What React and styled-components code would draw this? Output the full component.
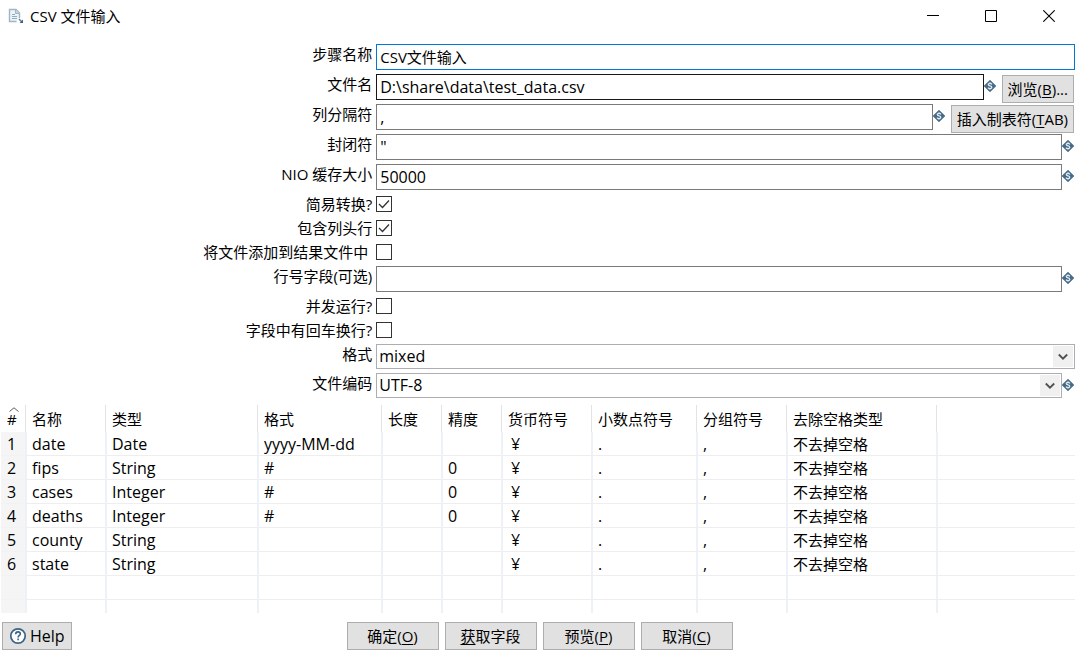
import React, { useState } from "react";
import styled, { createGlobalStyle } from "styled-components";

const checkRowsTop = [
  { id: "lazy", label: "简易转换?", checked: true },
  { id: "header", label: "包含列头行", checked: true },
  { id: "addResult", label: "将文件添加到结果文件中 ", checked: false },
];

const checkRowsBottom = [
  { id: "parallel", label: "并发运行?", checked: false },
  { id: "newline", label: "字段中有回车换行?", checked: false },
];

const columns = [
  { title: "名称", width: 80 },
  { title: "类型", width: 152 },
  { title: "格式", width: 124 },
  { title: "长度", width: 60 },
  { title: "精度", width: 60 },
  { title: "货币符号", width: 90 },
  { title: "小数点符号", width: 105 },
  { title: "分组符号", width: 90 },
  { title: "去除空格类型", width: 150 },
];

const fields = [
  ["date", "Date", "yyyy-MM-dd", "", "", "¥", ".", ",", "不去掉空格"],
  ["fips", "String", "#", "", "0", "¥", ".", ",", "不去掉空格"],
  ["cases", "Integer", "#", "", "0", "¥", ".", ",", "不去掉空格"],
  ["deaths", "Integer", "#", "", "0", "¥", ".", ",", "不去掉空格"],
  ["county", "String", "", "", "", "¥", ".", ",", "不去掉空格"],
  ["state", "String", "", "", "", "¥", ".", ",", "不去掉空格"],
];

const VariableIcon = () => (
  <Variable width="12" height="12" viewBox="0 0 12 12" aria-hidden="true">
    <path
      d="M6 0.6L11.4 6L6 11.4L0.6 6Z"
      fill="#456a87"
      stroke="#456a87"
      strokeWidth="1.2"
      strokeLinejoin="round"
    />
    <path
      d="M7.8 4.4C7.5 3.7 6.8 3.4 6 3.4C5 3.4 4.3 3.9 4.3 4.6C4.3 6.3 7.8 5.5 7.8 7.3C7.8 8.1 7 8.6 6 8.6C5.1 8.6 4.4 8.2 4.1 7.6M6 2.2V3.4M6 8.6V9.8"
      fill="none"
      stroke="#e3ebf0"
      strokeWidth="1.3"
    />
  </Variable>
);

const FileIcon = () => (
  <svg width="16" height="16" viewBox="0 0 16 16" aria-hidden="true">
    <path d="M8.5 13.5H1.5V1.5H8L11.5 5V10" fill="#eef3f7" stroke="#9fb6c6" strokeWidth="1.4" />
    <path d="M7.5 1.5V5.5H11.5" fill="#c5d4de" stroke="#9fb6c6" />
    <path d="M4 6.5H7M4 8.5H9M4 10.5H9" stroke="#8fabbe" />
    <path d="M11 11L14 14" stroke="#5b7d96" strokeWidth="1.4" />
    <path d="M15 11.5V15H11.5Z" fill="#3d6484" />
  </svg>
);

const TextRow = ({ id, label, value, tone, small, variable, children }) => (
  <Row>
    <Label htmlFor={id}>{label}</Label>
    <TextInput id={id} defaultValue={value} $tone={tone} $small={small} />
    {variable && <VariableIcon />}
    {children}
  </Row>
);

const CheckRow = ({ id, label, checked }) => {
  const [on, setOn] = useState(checked);
  return (
    <Row $height={24}>
      <Label htmlFor={id}>{label}</Label>
      <CheckWrapper>
        <CheckInput id={id} type="checkbox" checked={on} onChange={() => setOn(!on)} />
        {on && (
          <CheckMark width="16" height="16" viewBox="0 0 16 16" aria-hidden="true">
            <path d="M3 8L6.5 11.5L13 4.5" fill="none" stroke="#333333" strokeWidth="1.3" />
          </CheckMark>
        )}
      </CheckWrapper>
    </Row>
  );
};

const SelectRow = ({ id, label, value, variable }) => (
  <Row $height={29}>
    <Label htmlFor={id}>{label}</Label>
    <SelectWrapper>
      <Select id={id} defaultValue={value}>
        <option>{value}</option>
      </Select>
      <Arrow>
        <svg width="10" height="8" viewBox="0 0 10 8" aria-hidden="true">
          <path d="M0.8 1.5L5 5.7L9.2 1.5" fill="none" stroke="#505050" strokeWidth="1.8" />
        </svg>
      </Arrow>
    </SelectWrapper>
    {variable && <VariableIcon />}
  </Row>
);

const App = () => {
  return (
    <>
      <GlobalStyle />
      <TitleBar>
        <FileIcon />
        <Title>CSV 文件输入</Title>
        <WindowButton aria-label="最小化">
          <svg width="12" height="12" viewBox="0 0 12 12">
            <path d="M0 5.5H12" stroke="#000" />
          </svg>
        </WindowButton>
        <WindowButton aria-label="最大化">
          <svg width="12" height="12" viewBox="0 0 12 12">
            <path d="M0.5 0.5H11.5V11.5H0.5Z" fill="none" stroke="#000" />
          </svg>
        </WindowButton>
        <WindowButton aria-label="关闭">
          <svg width="12" height="12" viewBox="0 0 12 12">
            <path d="M0.3 0.3L11.7 11.7M11.7 0.3L0.3 11.7" stroke="#000" strokeWidth="1.1" />
          </svg>
        </WindowButton>
      </TitleBar>

      <Form>
        <TextRow id="stepName" label="步骤名称" value="CSV文件输入" tone="#0078d7" small />
        <TextRow id="fileName" label="文件名" value="D:\share\data\test_data.csv" tone="#171717" variable>
          <SideButton>
            浏览(<u>B</u>)...
          </SideButton>
        </TextRow>
        <TextRow id="delimiter" label="列分隔符" value="," variable>
          <SideButton>
            插入制表符(<u>T</u>AB)
          </SideButton>
        </TextRow>
        <TextRow id="enclosure" label="封闭符" value={'"'} variable />
        <TextRow id="buffer" label="NIO 缓存大小" value="50000" variable />
        {checkRowsTop.map((item) => (
          <CheckRow key={item.id} {...item} />
        ))}
        <TextRow id="rowNumber" label="行号字段(可选)" value="" variable />
        {checkRowsBottom.map((item) => (
          <CheckRow key={item.id} {...item} />
        ))}
        <SelectRow id="format" label="格式" value="mixed" />
        <SelectRow id="encoding" label="文件编码" value="UTF-8" variable />
      </Form>

      <TableWrapper>
        <Table>
          <colgroup>
            <Col $width={26} />
            {columns.map((column) => (
              <Col key={column.title} $width={column.width} />
            ))}
            <col />
          </colgroup>
          <thead>
            <tr>
              <HeadCell $index>
                #
                <SortMark width="10" height="5" viewBox="0 0 10 5" aria-hidden="true">
                  <path d="M0.5 4.5L5 0.8L9.5 4.5" fill="none" stroke="#606060" />
                </SortMark>
              </HeadCell>
              {columns.map((column) => (
                <HeadCell key={column.title}>{column.title}</HeadCell>
              ))}
              <HeadCell $last />
            </tr>
          </thead>
          <tbody>
            {fields.map((row, i) => (
              <tr key={row[0]}>
                <IndexCell>{i + 1}</IndexCell>
                {row.map((value, j) => (
                  <Cell key={j} $cjk={j === 8} $currency={j === 5}>
                    {value}
                  </Cell>
                ))}
                <Cell $last />
              </tr>
            ))}
            {[0, 1].map((n) => (
              <tr key={n}>
                <IndexCell />
                {columns.map((column) => (
                  <Cell key={column.title} />
                ))}
                <Cell $last />
              </tr>
            ))}
          </tbody>
        </Table>
      </TableWrapper>

      <Footer>
        <HelpButton>
          <svg width="18" height="18" viewBox="0 0 18 18" aria-hidden="true">
            <circle cx="9" cy="9" r="7.2" fill="#fff" stroke="#3d6484" strokeWidth="1.7" />
            <path
              d="M6.7 7.2C6.7 5.7 7.7 4.9 9 4.9C10.3 4.9 11.3 5.7 11.3 6.9C11.3 8.4 9.1 8.5 9.1 10.4M9.1 11.6V13.2"
              fill="none"
              stroke="#3d6484"
              strokeWidth="1.6"
            />
          </svg>
          Help
        </HelpButton>
        <Actions>
          <ActionButton>
            确定(<u>O</u>)
          </ActionButton>
          <ActionButton>
            <u>获</u>取字段
          </ActionButton>
          <ActionButton>
            预览(<u>P</u>)
          </ActionButton>
          <ActionButton>
            取消(<u>C</u>)
          </ActionButton>
        </Actions>
      </Footer>
    </>
  );
};

export default App;

const GlobalStyle = createGlobalStyle`
  * {
    box-sizing: border-box;
  }
  body {
    margin: 0;
    background: #ffffff;
    color: #000000;
    font-family: "Open Sans", "Noto Sans CJK SC", sans-serif;
    font-size: 15px;
    line-height: 20px;
  }
  button, input, select {
    font-family: inherit;
    font-size: inherit;
    color: inherit;
    margin: 0;
  }
  svg {
    display: block;
    flex: none;
  }
`;

const TitleBar = styled.header`
  display: flex;
  align-items: center;
  height: 32px;
  padding-left: 8px;
`;

const Title = styled.h1`
  flex: 1;
  margin: 0;
  padding-left: 6px;
  font-size: 15px;
  font-weight: 400;
`;

const WindowButton = styled.button`
  display: flex;
  align-items: center;
  justify-content: center;
  width: 58px;
  height: 32px;
  padding: 0 0 0 2px;
  border: 0;
  background: transparent;
`;

const Form = styled.form`
  padding: 12px 2px 0 0;
`;

const Row = styled.div`
  display: flex;
  align-items: flex-start;
  height: ${(props) => props.$height || 30}px;
`;

const Label = styled.label`
  flex: 0 0 35%;
  padding-right: 4px;
  text-align: right;
  white-space: pre;
`;

const TextInput = styled.input`
  flex: 1;
  min-width: 0;
  height: 26px;
  padding: ${(props) => (props.$small ? "0 3px 2px" : "0 3px")};
  border: 1px solid ${(props) => props.$tone || "#7a7a7a"};
  border-radius: 0;
  background: #ffffff;
  outline: none;
  && {
    font-size: ${(props) => (props.$small ? 15 : 16)}px;
  }
`;

const Variable = styled.svg`
  margin: 6px 1px 0 0;
`;

const CheckWrapper = styled.span`
  position: relative;
  margin-top: 2px;
  height: 16px;
`;

const CheckInput = styled.input`
  appearance: none;
  display: block;
  width: 16px;
  height: 16px;
  border: 1px solid #333333;
  background: #ffffff;
`;

const CheckMark = styled.svg`
  position: absolute;
  inset: 0;
  pointer-events: none;
`;

const SelectWrapper = styled.span`
  position: relative;
  flex: 1;
  height: 25px;
`;

const Select = styled.select`
  appearance: none;
  display: block;
  width: 100%;
  height: 25px;
  padding: 0 24px 1px 2px;
  border: 1px solid #adadb3;
  border-radius: 0;
  background: #ffffff;
  && {
    font-size: 16px;
  }
`;

const Arrow = styled.span`
  position: absolute;
  top: 2px;
  right: 2px;
  bottom: 2px;
  display: flex;
  align-items: center;
  justify-content: center;
  width: 20px;
  background: #f0f0f0;
  pointer-events: none;
`;

const Button = styled.button.attrs({ type: "button" })`
  height: 28px;
  padding: 0 5px 2px;
  border: 1px solid #adadad;
  border-radius: 0;
  background: #e1e1e1;
  white-space: nowrap;
  u {
    text-underline-offset: 2px;
  }
`;

const SideButton = styled(Button)`
  margin: 1px 1px 0 5px;
`;

const TableWrapper = styled.div`
  height: 208px;
  margin: 3px 2px 0 1px;
  overflow: hidden;
`;

const Table = styled.table`
  width: 100%;
  table-layout: fixed;
  border-collapse: separate;
  border-spacing: 0;
`;

const Col = styled.col`
  width: ${(props) => props.$width}px;
`;

const HeadCell = styled.th`
  position: relative;
  height: 27px;
  padding: ${(props) => (props.$index ? "0 0 0 6px" : "0 0 0 5px")};
  font-weight: 400;
  text-align: left;
  white-space: nowrap;
  background: ${(props) =>
    props.$last ? "none" : "linear-gradient(#e3e3e3, #e3e3e3) right 1px top / 1px 100% no-repeat"};
`;

const SortMark = styled.svg`
  position: absolute;
  top: 2px;
  left: 8px;
`;

const Cell = styled.td`
  height: 24px;
  padding: 0 0 0 ${(props) => (props.$currency ? 8 : 5)}px;
  border-right: ${(props) => (props.$last ? "0" : "2px solid #edf1f8")};
  border-bottom: 1px solid #eeeeee;
  font-size: ${(props) => (props.$cjk ? 15 : 16)}px;
  white-space: nowrap;
`;

const IndexCell = styled(Cell)`
  padding-left: 6px;
  border-bottom-color: #f2f2f2;
  background: #f5f5f5;
`;

const Footer = styled.footer`
  display: grid;
  grid-template-columns: 1fr auto 1fr;
  align-items: center;
  padding: 9px 0 6px 2px;
`;

const HelpButton = styled(Button)`
  display: flex;
  align-items: center;
  justify-self: start;
  gap: 3px;
  padding: 0 6px;
  && {
    font-size: 16px;
  }
`;

const Actions = styled.div`
  display: flex;
  gap: 6px;
`;

const ActionButton = styled(Button)`
  width: 92px;
`;
